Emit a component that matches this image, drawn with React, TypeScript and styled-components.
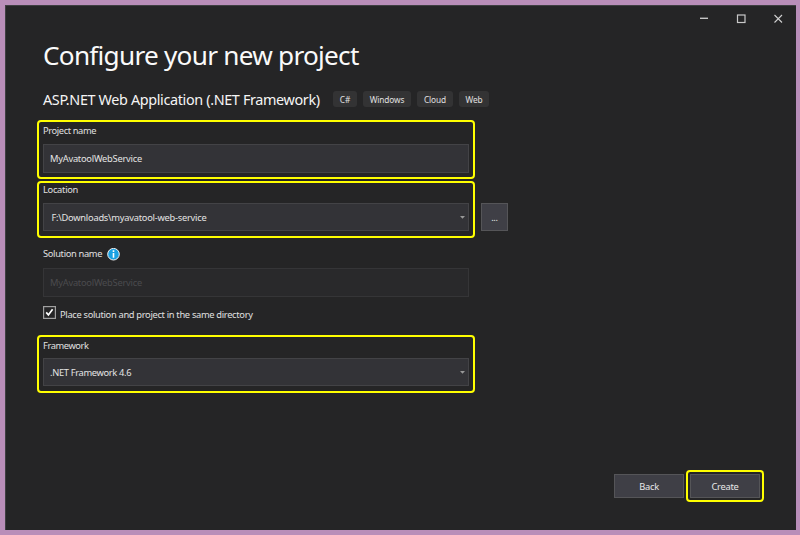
import React from "react";
import styled, { createGlobalStyle } from "styled-components";

const Global = createGlobalStyle`
  * { box-sizing: border-box; }
  body { margin: 0; background: #b98eb9; }
`;

const Frame = styled.div`
  width: 800px;
  height: 535px;
  padding: 5px 4px 5px 5px;
  background: #b98eb9;
  font-family: "Noto Sans", "Open Sans", sans-serif;
  font-size: 9.3px;
  color: #e0e0e0;
  white-space: nowrap;
  overflow: hidden;
`;

const Window = styled.main`
  width: 791px;
  height: 525px;
  background: #252526;
  border-top: 1px solid #3f3f42;
  border-left: 1px solid #3f3f42;
  display: flex;
  flex-direction: column;
`;

const TitleBar = styled.header`
  height: 26px;
  flex: none;
  display: flex;
  justify-content: flex-end;
  padding-right: 12px;
  gap: 25px;
`;

const WindowButton = styled.button`
  width: 12px;
  height: 26px;
  padding: 0;
  border: 0;
  background: none;
  svg { display: block; }
`;

const Content = styled.section`
  display: flex;
  flex-direction: column;
  align-items: flex-start;
  padding-left: 31px;
`;

const Title = styled.h1`
  margin: 3px 0 0 6px;
  height: 40px;
  line-height: 40px;
  font-size: 26.2px;
  font-weight: 400;
  letter-spacing: -0.75px;
  color: #fafafa;
`;

const TemplateRow = styled.div`
  margin: 16px 0 0 6px;
  display: flex;
  height: 17px;
`;

const TemplateName = styled.h2`
  margin: 0;
  width: 290px;
  font-size: 14.4px;
  font-weight: 400;
  line-height: 17px;
  letter-spacing: -0.36px;
  color: #f5f5f5;
`;

const Tag = styled.span<{ $w: number }>`
  width: ${(p) => p.$w}px;
  height: 16px;
  margin-right: 6px;
  border-radius: 3px;
  background: #333334;
  text-align: center;
  font-size: 8.3px;
  line-height: 17px;
  letter-spacing: -0.1px;
`;

const Group = styled.div<{ $h: number; $top: number; $marked?: boolean }>`
  width: 438px;
  height: ${(p) => p.$h}px;
  margin-top: ${(p) => p.$top}px;
  padding: 0 4px;
  border: 2px solid ${(p) => (p.$marked ? "#ffff00" : "transparent")};
  border-radius: 4px;
`;

const LocationRow = styled.div`
  display: flex;
  align-items: flex-start;
`;

const Label = styled.label<{ $h: number; $gap: number; $track: number }>`
  display: flex;
  align-items: center;
  gap: 4.5px;
  height: ${(p) => p.$h}px;
  margin-bottom: ${(p) => p.$gap}px;
  line-height: 16px;
  letter-spacing: ${(p) => p.$track}px;
`;

const Field = styled.div<{ $h?: number; $indent?: number; $disabled?: boolean; $track?: number }>`
  width: 426px;
  height: ${(p) => p.$h ?? 28}px;
  display: flex;
  align-items: center;
  justify-content: space-between;
  padding: 0 3px 0 ${(p) => p.$indent ?? 6}px;
  border: 1px solid ${(p) => (p.$disabled ? "#353537" : "#434346")};
  background: ${(p) => (p.$disabled ? "#29292b" : "#333337")};
  color: ${(p) => (p.$disabled ? "#4b4b4e" : "#e4e4e4")};
  letter-spacing: ${(p) => p.$track ?? -0.24}px;
`;

const Button = styled.button<{ $w: number; $h: number }>`
  width: ${(p) => p.$w}px;
  height: ${(p) => p.$h}px;
  padding: 0;
  border: 1px solid #555558;
  background: #3f3f46;
  color: #e8e8e8;
  font: inherit;
  letter-spacing: -0.25px;
`;

const Browse = styled(Button)`
  margin: 24px 0 0 6px;
`;

const CheckRow = styled.div`
  display: flex;
  align-items: center;
  margin: 5px 0 0 6px;
  height: 19px;
  gap: 4px;
  letter-spacing: -0.31px;
  svg { margin-bottom: 5px; }
`;

const Footer = styled.footer`
  display: flex;
  justify-content: flex-end;
  align-items: center;
  margin: 77px 32px 0 0;
  gap: 2px;
`;

const CreateMark = styled.div`
  width: 78px;
  height: 32px;
  border: 2px solid #ffff00;
  border-radius: 4px;
  display: flex;
  align-items: center;
  justify-content: center;
`;

const Arrow = () => (
  <svg width="5" height="3" viewBox="0 0 5 3">
    <path d="M0 0h5L2.5 2.8z" fill="#999" />
  </svg>
);

const Info = () => (
  <svg width="13" height="13" viewBox="0 0 13 13">
    <circle cx="6.5" cy="6.2" r="5.8" fill="#1ba1e2" stroke="#f2f2f2" strokeWidth="1" />
    <path d="M5.7 2.3h1.6v1.6H5.7zM5.7 4.9h1.6v4.9H5.7z" fill="#fff" />
  </svg>
);

const Check = () => (
  <svg width="13" height="13" viewBox="0 0 13 13">
    <rect x=".6" y=".6" width="11.8" height="11.8" fill="#252526" stroke="#a0a0a0" strokeWidth="1.2" />
    <path d="M3.2 6.4 5.4 8.9 9.6 3.2" fill="none" stroke="#fff" strokeWidth="1.7" />
  </svg>
);

export default function App() {
  return (
    <Frame>
      <Global />
      <Window>
        <TitleBar>
          <WindowButton aria-label="Minimize">
            <svg width="12" height="26"><path d="M2 12.3h8" stroke="#c4c4c4" strokeWidth="1.4" /></svg>
          </WindowButton>
          <WindowButton aria-label="Maximize">
            <svg width="12" height="26"><rect x="2.5" y="9" width="7.5" height="7.5" fill="none" stroke="#c8c8c8" strokeWidth="1.2" /></svg>
          </WindowButton>
          <WindowButton aria-label="Close">
            <svg width="12" height="26"><path d="m2.5 9 7.5 7.5M10 9l-7.5 7.5" stroke="#d0d0d0" strokeWidth="1.1" /></svg>
          </WindowButton>
        </TitleBar>
        <Content>
          <Title>Configure your new project</Title>
          <TemplateRow>
            <TemplateName>ASP.NET Web Application (.NET Framework)</TemplateName>
            <Tag $w={24}>C#</Tag>
            <Tag $w={48}>Windows</Tag>
            <Tag $w={36}>Cloud</Tag>
            <Tag $w={30}>Web</Tag>
          </TemplateRow>
          <Group $h={59} $top={12} $marked>
            <Label $h={17} $gap={5} $track={-0.38}>Project name</Label>
            <Field $h={29}>MyAvatoolWebService</Field>
          </Group>
          <LocationRow>
            <Group $h={57} $top={2} $marked>
              <Label $h={14} $gap={6} $track={-0.28}>Location</Label>
              <Field $indent={7.5}>F:\Downloads\myavatool-web-service<Arrow /></Field>
            </Group>
            <Browse $w={27} $h={28}>...</Browse>
          </LocationRow>
          <Group $h={57} $top={5}>
            <Label $h={18} $gap={5} $track={-0.32}>Solution name<Info /></Label>
            <Field $disabled $h={29}>MyAvatoolWebService</Field>
          </Group>
          <CheckRow><Check />Place solution and project in the same directory</CheckRow>
          <Group $h={58} $top={11} $marked>
            <Label $h={17} $gap={4} $track={-0.4}>Framework</Label>
            <Field $track={-0.32}>.NET Framework 4.6<Arrow /></Field>
          </Group>
        </Content>
        <Footer>
          <Button $w={70} $h={24}>Back</Button>
          <CreateMark><Button $w={70} $h={24}>Create</Button></CreateMark>
        </Footer>
      </Window>
    </Frame>
  );
}
